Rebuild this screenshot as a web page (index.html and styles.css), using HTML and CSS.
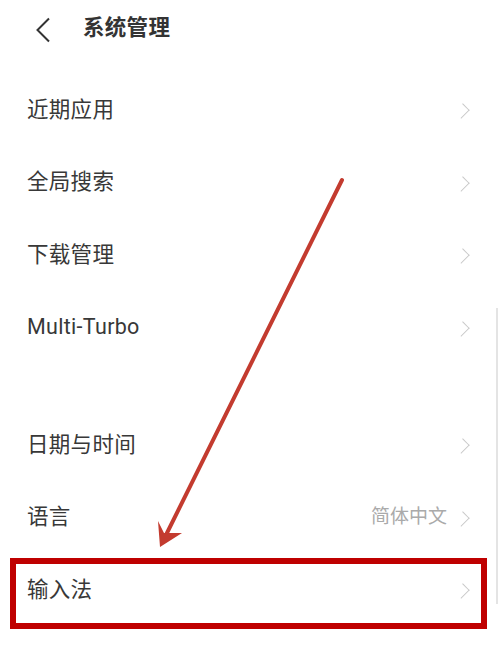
FILE: index.html
```html
<!DOCTYPE html>
<html lang="zh-CN">
<head>
<meta charset="utf-8">
<link rel="stylesheet" href="styles.css">
</head>
<body>
<div class="page">
  <header class="header">
    <span class="back">
      <svg width="16" height="26" viewBox="0 0 16 26"><path d="M14 1.5 L2.5 13 L14 24.5" fill="none" stroke="#333" stroke-width="2"/></svg>
    </span>
    <h1 class="title">系统管理</h1>
  </header>
  <ul class="list">
    <li class="row"><span class="label">近期应用</span><span class="chev"></span></li>
    <li class="row"><span class="label">全局搜索</span><span class="chev"></span></li>
    <li class="row"><span class="label">下载管理</span><span class="chev"></span></li>
    <li class="row"><span class="label">Multi-Turbo</span><span class="chev"></span></li>
    <li class="spacer"></li>
    <li class="row"><span class="label">日期与时间</span><span class="chev"></span></li>
    <li class="row"><span class="label">语言</span><span class="value">简体中文</span><span class="chev"></span></li>
    <li class="row"><span class="label">输入法</span><span class="chev"></span></li>
  </ul>
  <div class="scrollbar"></div>
  <div class="highlight"></div>
  <svg class="arrow" width="500" height="648" viewBox="0 0 500 648">
    <line x1="342" y1="180" x2="163" y2="541" stroke="#c33b2f" stroke-width="4" stroke-linecap="round"/>
    <path d="M160 547 L158 521 L164 533 L182 533 Z" fill="#c33b2f"/>
  </svg>
</div>
</body>
</html>
```
FILE: styles.css
```css
* { box-sizing: border-box; margin: 0; padding: 0; }
html, body { width: 500px; height: 648px; background: #fff; overflow: hidden; }
body { font-family: "Roboto", "Noto Sans CJK SC", sans-serif; color: #333; }
.page { position: relative; width: 500px; height: 648px; }
.header { height: 75px; display: flex; align-items: flex-start; padding-top: 17px; padding-left: 35px; }
.back { display: flex; width: 16px; height: 26px; margin-right: 32px; }
.title { font-size: 21.5px; font-weight: 700; line-height: 26px; color: #333; letter-spacing: 0.3px; position: relative; top: -2px; }
.list { list-style: none; }
.row { height: 72.5px; display: flex; align-items: center; padding-left: 27px; padding-right: 30px; }
.label { flex: 1; font-size: 21.5px; color: #383838; letter-spacing: 0.3px; line-height: 26px; padding-bottom: 3px; }
.value { font-size: 19px; color: #aaa; margin-right: 12px; line-height: 24px; padding-bottom: 3px; }
.chev { width: 11px; height: 18px; display: block; position: relative; }
.chev::before { content: ""; position: absolute; left: -3px; top: 3px; width: 11px; height: 11px; border-right: 1.5px solid #c8c8c8; border-top: 1.5px solid #c8c8c8; transform: rotate(45deg) scaleX(0.8); }
.spacer { height: 45px; }
.scrollbar { position: absolute; left: 496px; top: 308px; width: 2px; height: 296px; background: #e4e4e4; }
.highlight { position: absolute; left: 10px; top: 558px; width: 477px; height: 71px; border: 6.5px solid #bf0000; }
.arrow { position: absolute; left: 0; top: 0; }
```
